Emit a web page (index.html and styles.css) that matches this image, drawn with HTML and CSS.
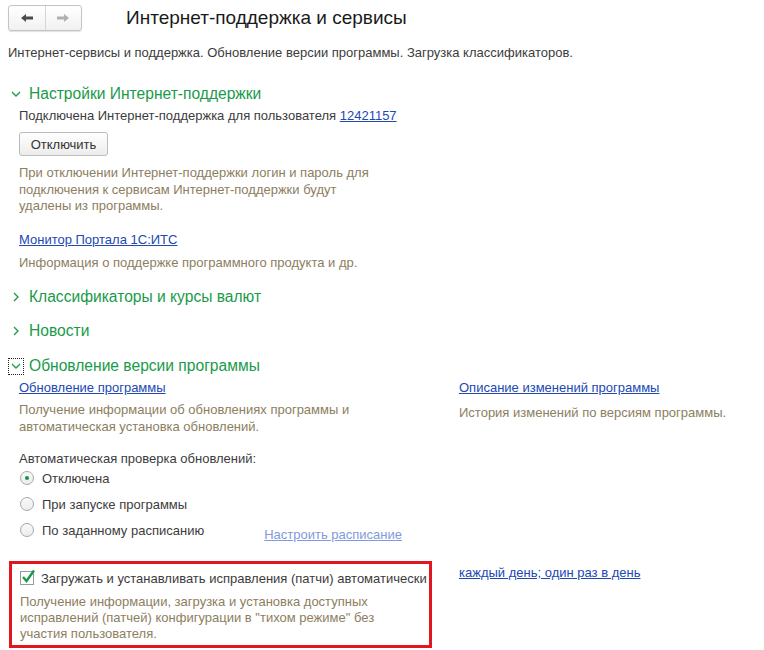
FILE: index.html
```html
<!DOCTYPE html>
<html lang="ru">
<head>
<meta charset="utf-8">
<title>Интернет-поддержка и сервисы</title>
<link rel="stylesheet" href="styles.css">
</head>
<body>
<div class="page">
  <div class="toolbar">
    <div class="nav">
      <span class="nav-btn">
        <svg width="14" height="10" viewBox="0 0 14 10"><path d="M1 5 L6 1 L6 3.5 L13 3.5 L13 6.5 L6 6.5 L6 9 Z" fill="#4a4a4a"/></svg>
      </span>
      <span class="nav-btn">
        <svg width="14" height="10" viewBox="0 0 14 10"><path d="M13 5 L8 1 L8 3.5 L1 3.5 L1 6.5 L8 6.5 L8 9 Z" fill="#b0b0b0"/></svg>
      </span>
    </div>
    <h1 class="title">Интернет-поддержка и сервисы</h1>
  </div>

  <p class="subtitle">Интернет-сервисы и поддержка. Обновление версии программы. Загрузка классификаторов.</p>

  <div class="group group-first">
    <div class="group-head">
      <span class="chev"><svg width="10" height="10" viewBox="0 0 10 10"><path d="M1 3 L5 7 L9 3" fill="none" stroke="#1a9a4a" stroke-width="1.3"/></svg></span>
      <span class="group-title">Настройки Интернет-поддержки</span>
    </div>
    <div class="group-body">
      <p class="line">Подключена Интернет-поддержка для пользователя <a class="link" href="#">12421157</a></p>
      <button class="btn">Отключить</button>
      <p class="hint hint-1">При отключении Интернет-поддержки логин и пароль для<br>подключения к сервисам Интернет-поддержки будут<br>удалены из программы.</p>
      <p class="line line-link"><a class="link" href="#">Монитор Портала 1С:ИТС</a></p>
      <p class="hint hint-2">Информация о поддержке программного продукта и др.</p>
    </div>
  </div>

  <div class="group group-closed group-2">
    <div class="group-head">
      <span class="chev"><svg width="10" height="10" viewBox="0 0 10 10"><path d="M3 1 L7 5 L3 9" fill="none" stroke="#1a9a4a" stroke-width="1.3"/></svg></span>
      <span class="group-title">Классификаторы и курсы валют</span>
    </div>
  </div>

  <div class="group group-closed">
    <div class="group-head">
      <span class="chev"><svg width="10" height="10" viewBox="0 0 10 10"><path d="M3 1 L7 5 L3 9" fill="none" stroke="#1a9a4a" stroke-width="1.3"/></svg></span>
      <span class="group-title">Новости</span>
    </div>
  </div>

  <div class="group group-update">
    <div class="group-head">
      <span class="chev chev-focus"><svg width="10" height="10" viewBox="0 0 10 10"><path d="M1 3 L5 7 L9 3" fill="none" stroke="#1a9a4a" stroke-width="1.3"/></svg></span>
      <span class="group-title">Обновление версии программы</span>
    </div>

    <div class="cols">
      <div class="col-left">
        <p class="line"><a class="link" href="#">Обновление программы</a></p>
        <p class="hint hint-3">Получение информации об обновлениях программы и<br>автоматическая установка обновлений.</p>
        <p class="line label">Автоматическая проверка обновлений:</p>
        <div class="radios">
          <div class="radio-row"><span class="radio on"></span><span>Отключена</span></div>
          <div class="radio-row"><span class="radio"></span><span>При запуске программы</span></div>
          <div class="radio-row"><span class="radio"></span><span>По заданному расписанию</span><a class="link link-light" href="#">Настроить расписание</a></div>
        </div>
      </div>
      <div class="col-right">
        <p class="line"><a class="link" href="#">Описание изменений программы</a></p>
        <p class="hint hint-4">История изменений по версиям программы.</p>
      </div>
    </div>

    <div class="cols cols-patch">
      <div class="patch-box">
        <div class="check-row">
          <span class="check"><svg width="16" height="16" viewBox="0 0 16 16"><path d="M3 8 L6.5 12 L14 1.5" fill="none" stroke="#1a9a4a" stroke-width="2.4"/></svg></span>
          <span>Загружать и устанавливать исправления (патчи) автоматически</span>
        </div>
        <p class="hint hint-5">Получение информации, загрузка и установка доступных<br>исправлений (патчей) конфигурации в "тихом режиме" без<br>участия пользователя.</p>
      </div>
      <div class="col-right">
        <p class="line line-sched"><a class="link" href="#">каждый день; один раз в день</a></p>
      </div>
    </div>
  </div>
</div>
</body>
</html>
```

FILE: styles.css
```css
* { box-sizing: border-box; }
html, body { margin: 0; padding: 0; background: #fff; }
body {
  font-family: "Liberation Sans", Arial, sans-serif;
  font-size: 13px;
  color: #3c3c3c;
}
p { margin: 0; }
.page { padding: 0 8px; }

.toolbar {
  display: flex;
  align-items: center;
  padding-top: 5px;
  height: 31px;
}
.nav {
  display: flex;
  width: 74px;
  height: 26px;
  border: 1px solid #c4c4c4;
  border-radius: 3px;
  background: linear-gradient(#ffffff, #f1f1f1);
  box-shadow: 0 1px 1px rgba(0,0,0,0.12);
}
.nav-btn {
  flex: 1;
  display: flex;
  align-items: center;
  justify-content: center;
}
.nav-btn + .nav-btn { border-left: 1px solid #d6d6d6; }
.title {
  margin: 0 0 0 44px;
  font-size: 19px;
  font-weight: normal;
  color: #1a1a1a;
  line-height: 24px;
}

.subtitle {
  margin-top: 14px;
  line-height: 16px;
  color: #3c3c3c;
}

.group-head {
  display: flex;
  align-items: center;
  height: 20px;
}
.chev {
  width: 16px;
  height: 17px;
  margin-right: 5px;
  display: flex;
  align-items: center;
  justify-content: center;
}
.chev-focus { outline: 1px dotted #222; outline-offset: -1px; }
.group-title {
  font-size: 15.6px;
  color: #1a9a4a;
  line-height: 20px;
}
.group { margin-top: 14px; }
.group-first { margin-top: 23px; }
.group-2 { margin-top: 16px; }
.group-update { margin-top: 15px; }
.group-body { padding-left: 11px; }

.line { line-height: 16px; }
.group-body > .line:first-child { margin-top: 4px; }

.link { color: #2148b3; text-decoration: underline; }
.link-light { color: #7f9ade; margin-left: 60px; position: relative; top: 4px; }

.btn {
  display: block;
  margin-top: 8px;
  width: 89px;
  height: 24px;
  border: 1px solid #bcbcbc;
  border-radius: 3px;
  background: linear-gradient(#ffffff, #ececec);
  font-family: inherit;
  font-size: 13px;
  color: #333;
  padding: 0;
}

.hint {
  color: #8c7e5e;
  line-height: 16.5px;
}
.hint-1 { margin-top: 9px; }
.line-link { margin-top: 17px; }
.hint-2 { margin-top: 7px; }

.cols { display: flex; }
.col-left { width: 451px; padding-left: 11px; }
.col-right { flex: 1; }
.cols > div > .line:first-child { margin-top: 4px; }
.hint-3 { margin-top: 5px; line-height: 17px; }
.hint-4 { margin-top: 9px; }
.label { margin-top: 16px; }

.radios { margin-top: -2px; }
.radio-row {
  display: flex;
  align-items: center;
  height: 26px;
}
.radio {
  width: 14px;
  height: 14px;
  border: 1px solid #a8a8a8;
  border-radius: 50%;
  background: linear-gradient(#fafafa, #ececec);
  margin: 0 8px 0 1px;
  position: relative;
  flex: none;
}
.radio.on::after {
  content: "";
  position: absolute;
  left: 4px;
  top: 4px;
  width: 4px;
  height: 4px;
  border-radius: 50%;
  background: #14924a;
}

.cols-patch { margin-top: 18px; }
.patch-box {
  width: 423px;
  margin-left: 1px;
  margin-right: 27px;
  border: 3px solid #e3161f;
  padding: 5px 0 3px 8px;
}
.check-row {
  display: flex;
  align-items: center;
  height: 18px;
}
.check {
  width: 14px;
  height: 14px;
  border: 1px solid #9a9a9a;
  background: #fff;
  margin: 0 7px 0 0;
  position: relative;
  flex: none;
}
.check svg { position: absolute; left: -1px; top: -3px; }
.patch-box .hint { margin-top: 7px; line-height: 16px; }
.line-sched { margin-top: 17px; }
```
